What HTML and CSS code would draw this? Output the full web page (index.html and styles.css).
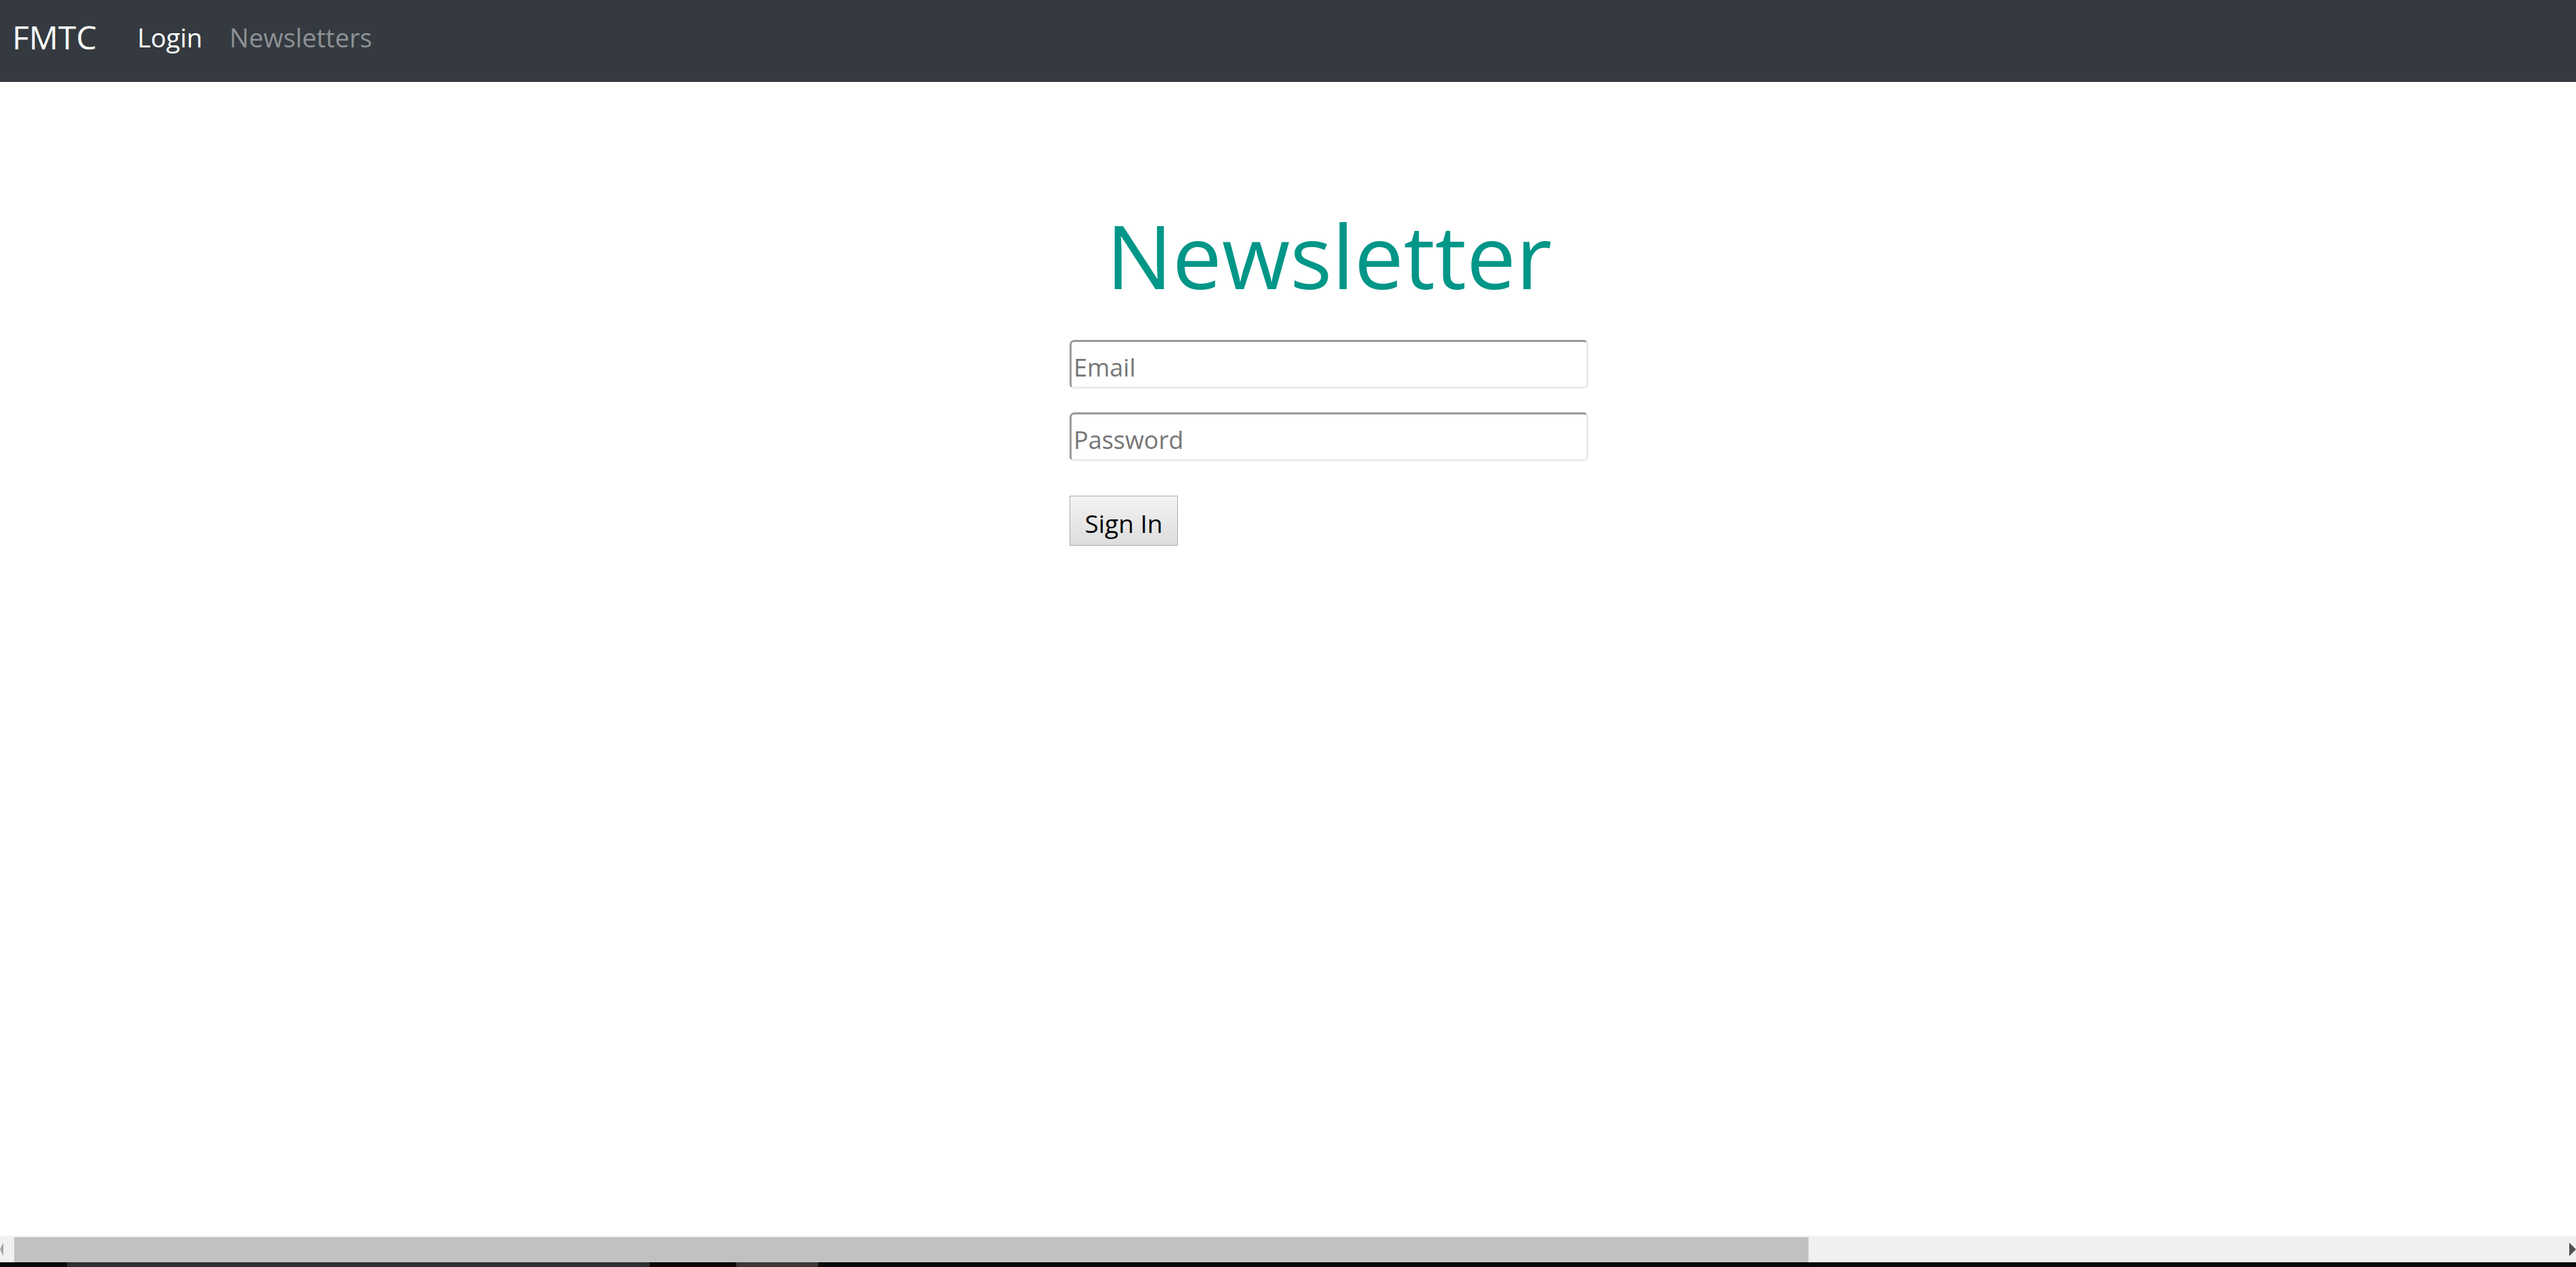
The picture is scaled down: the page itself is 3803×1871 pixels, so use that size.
FILE: index.html
```html
<!DOCTYPE html>
<html lang="en">
<head>
<meta charset="utf-8">
<title>Newsletter</title>
<link rel="stylesheet" href="styles.css">
</head>
<body>
<nav class="navbar">
  <a class="brand" href="#">FMTC</a>
  <ul class="nav-links">
    <li><a class="nav-link active" href="#">Login</a></li>
    <li><a class="nav-link" href="#">Newsletters</a></li>
  </ul>
</nav>
<main class="page">
  <h1 class="title">Newsletter</h1>
  <form class="login-form">
    <input class="field" type="email" placeholder="Email">
    <input class="field" type="password" placeholder="Password">
    <button class="btn" type="button">Sign In</button>
  </form>
</main>
<div class="hscroll">
  <div class="hscroll-track">
    <span class="arrow arrow-left"></span>
    <span class="thumb"></span>
    <span class="arrow arrow-right"></span>
  </div>
  <div class="taskbar">
    <span class="tb tb-a"></span>
    <span class="tb tb-b"></span>
    <span class="tb tb-c"></span>
    <span class="tb tb-d"></span>
    <span class="tb tb-e"></span>
  </div>
</div>
</body>
</html>
```
FILE: styles.css
```css
html, body {
  margin: 0;
  padding: 0;
  height: 100%;
  overflow: hidden;
  background: #ffffff;
  font-family: "Open Sans", "Noto Sans", sans-serif;
}

.navbar {
  box-sizing: border-box;
  height: 121px;
  background: #343a40;
  display: flex;
  align-items: center;
  padding: 0 0 12px 18px;
}

.brand {
  color: #ffffff;
  font-size: 48px;
  text-decoration: none;
  margin-right: 60px;
}

.nav-links {
  list-style: none;
  margin: 0;
  padding: 0;
  display: flex;
  gap: 40px;
}

.nav-link {
  font-size: 38px;
  color: #8e9195;
  text-decoration: none;
}

.nav-link.active {
  color: #ffffff;
}

.page {
  display: flex;
  flex-direction: column;
  align-items: center;
  padding-left: 121px;
}

.title {
  margin: 178px 0 0 0;
  font-size: 130px;
  line-height: 156px;
  font-weight: 400;
  color: #009688;
}

.login-form {
  width: 766px;
  margin-top: 47px;
  display: flex;
  flex-direction: column;
  align-items: flex-start;
}

.field {
  box-sizing: border-box;
  width: 766px;
  height: 72px;
  border: 3px solid;
  border-color: #999999 #ebebeb #ebebeb #999999;
  border-radius: 7px;
  padding: 8px 3px 0 3px;
  font-family: "Open Sans", "Noto Sans", sans-serif;
  font-size: 36px;
  color: #222222;
  background: #ffffff;
  outline: none;
}

.field::placeholder {
  color: #767676;
}

.field + .field {
  margin-top: 35px;
}

.btn {
  box-sizing: border-box;
  margin-top: 51px;
  width: 160px;
  height: 74px;
  padding: 6px 0 0 0;
  border: 1px solid #adadad;
  border-radius: 0;
  background: linear-gradient(#f3f3f3, #dddddd);
  font-family: "Open Sans", "Noto Sans", sans-serif;
  font-size: 37px;
  color: #000000;
}

.hscroll {
  position: fixed;
  left: 0;
  right: 0;
  bottom: 0;
  height: 46px;
  display: flex;
  flex-direction: column;
}

.hscroll-track {
  position: relative;
  height: 39px;
  background: #f0f0f0;
}

.thumb {
  position: absolute;
  left: 21px;
  top: 2px;
  bottom: 0;
  width: 2649px;
  background: #c1c1c1;
}

.arrow {
  position: absolute;
  top: 10px;
  width: 0;
  height: 0;
  border-top: 10px solid transparent;
  border-bottom: 10px solid transparent;
}

.arrow-left {
  left: 0;
  border-right: 5px solid #a3a3a3;
}

.arrow-right {
  right: 0;
  border-left: 10px solid #505050;
}

.taskbar {
  display: flex;
  height: 7px;
  background: #0c0a0a;
}

.tb {
  display: block;
  height: 100%;
}

.tb-a { width: 99px; background: #0a0a0a; }
.tb-b { width: 860px; background: #303030; }
.tb-c { width: 128px; background: #0e0808; }
.tb-d { width: 121px; background: #3e3636; }
.tb-e { flex: 1; background: #0c0a0a; }
```
